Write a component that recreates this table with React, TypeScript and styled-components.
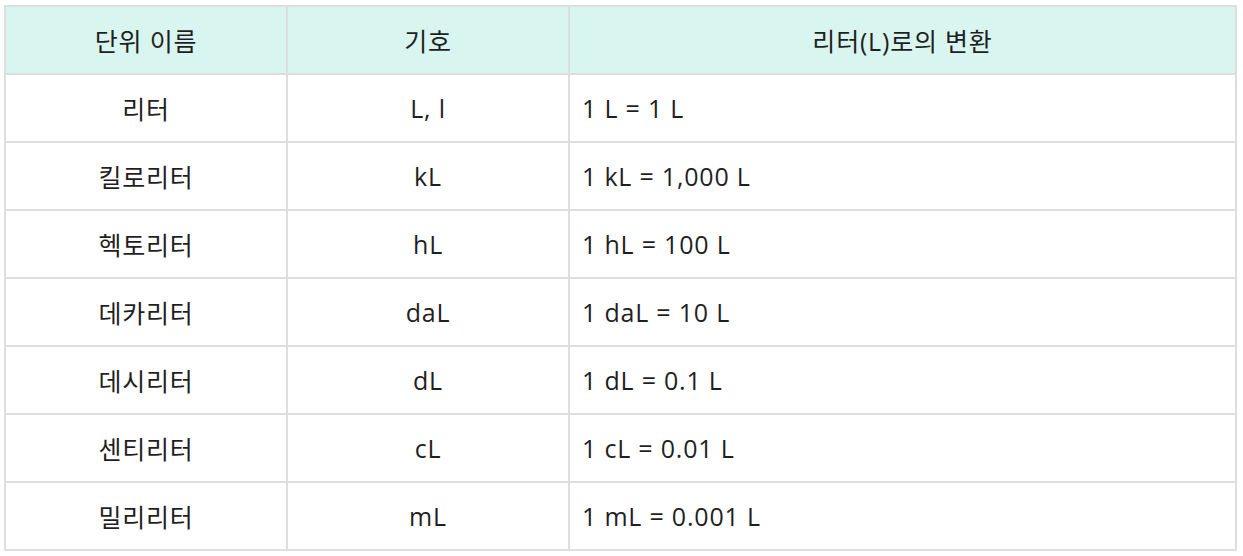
import styled, { createGlobalStyle } from "styled-components"

const GlobalStyle = createGlobalStyle`
body {
  margin: 0;
  background: #fff;
  font-family: 'Open Sans', 'Noto Sans CJK KR', sans-serif;
}
`
const Wrap = styled.div`
padding: 5px 6px 0 4px;
`
const Table = styled.table`
width: 100%;
border-collapse: collapse;
border: 2px solid #dedede;
table-layout: fixed;
color: #1f1f1f;
font-size: 25px;
font-weight: 400;
letter-spacing: 0.8px;
`
const HeadCell = styled.th`
background: #d9f5ef;
border: 2px solid #dedede;
height: 66px;
padding: 0;
font-weight: 400;
text-align: center;
`
const Cell = styled.td<{ $left?: boolean }>`
border: 2px solid #dedede;
height: 66px;
padding: ${p => (p.$left ? "0 12px" : "0")};
text-align: ${p => (p.$left ? "left" : "center")};
`

const rows = [
    ["리터", "L, l", "1 L = 1 L"],
    ["킬로리터", "kL", "1 kL = 1,000 L"],
    ["헥토리터", "hL", "1 hL = 100 L"],
    ["데카리터", "daL", "1 daL = 10 L"],
    ["데시리터", "dL", "1 dL = 0.1 L"],
    ["센티리터", "cL", "1 cL = 0.01 L"],
    ["밀리리터", "mL", "1 mL = 0.001 L"],
]

const App = () => {
    return (
        <Wrap>
            <GlobalStyle />
            <Table>
                <colgroup>
                    <col style={{ width: "282px" }} />
                    <col style={{ width: "282px" }} />
                    <col />
                </colgroup>
                <thead>
                    <tr>
                        <HeadCell>단위 이름</HeadCell>
                        <HeadCell>기호</HeadCell>
                        <HeadCell>리터(L)로의 변환</HeadCell>
                    </tr>
                </thead>
                <tbody>
                    {rows.map(r => (
                        <tr key={r[0]}>
                            <Cell>{r[0]}</Cell>
                            <Cell>{r[1]}</Cell>
                            <Cell $left>{r[2]}</Cell>
                        </tr>
                    ))}
                </tbody>
            </Table>
        </Wrap>
    )
}

export default App
